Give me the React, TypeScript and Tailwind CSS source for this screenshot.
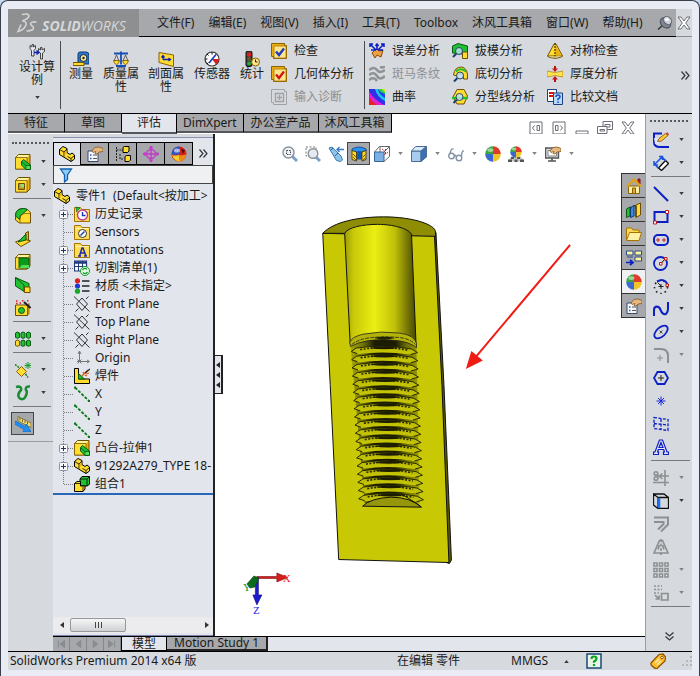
import React, { type ReactNode } from "react";

const Y = "#ffdc2e";
const YD = "#e8ae14";
const YL = "#fff4a0";
const K = "#6e4e00";
const G = "#1fc032";
const GD = "#0a5a14";
const B = "#0b1fc4";
const N = "#8d8f92";

const box = (
  <>
    <path d="M.5 3.500 3.500.5H15V12l-3 3H.5z" fill={YD} stroke={K} />
    <path d="M1 3.500 3.500 1h11l-2.500 2.500z" fill={YL} />
    <path d="M.5 3.500H12V15H.5z" fill={Y} stroke={K} strokeWidth=".7" />
  </>
);
const check = (color: string) => (
  <>
    <path d="M.5.5h13v2h2v13H2.500v-2h-2z" fill={YD} stroke="#8a6200" />
    <path d="M3 3h12v12H3z" fill="#ffe68a" stroke="#a87400" strokeWidth=".8" />
    <path d="M5 8.500l3 3.500 5-6.500" fill="none" stroke={color} strokeWidth="2.400" />
  </>
);
const ball = (cx: number, cy: number, r: number) => (
  <>
    <path d={`M${cx} ${cy}V${cy - r}A${r} ${r} 0 0 0 ${cx - r} ${cy}z`} fill="#3ca63c" />
    <path d={`M${cx} ${cy}V${cy - r}A${r} ${r} 0 0 1 ${cx + r} ${cy}z`} fill="#e23a2a" />
    <path d={`M${cx} ${cy}V${cy + r}A${r} ${r} 0 0 1 ${cx - r} ${cy}z`} fill="#3a6ad0" />
    <path d={`M${cx} ${cy}V${cy + r}A${r} ${r} 0 0 0 ${cx + r} ${cy}z`} fill="#f0c52a" />
    <ellipse cx={cx - r / 3} cy={cy - r / 2} rx={r / 2.500} ry={r / 4} fill="#fff" opacity=".5" />
  </>
);
const folder = (
  <>
    <path d="M.5 1.500h6L8 3.500h7.500v12H.5z" fill="#ffdc58" stroke="#a87400" />
    <path d="M1.500 4.500h13" stroke="#fff4b0" />
  </>
);
const hand = (
  <path d="M5 5l3-3.500 4-.5 4 1.500v3l-4 .5-2 2-2-.5 1-2-3 1z" fill="#e8b87c" stroke="#7a4c1c" strokeWidth=".7" />
);
const lens = (cx: number, cy: number, r: number) => (
  <>
    <path d={`M${cx - r + 1} ${cy + r - 1}l-3.500 3.500`} stroke="#1c3c70" strokeWidth="2" />
    <circle cx={cx} cy={cy} r={r} fill="#bfe4f4" fillOpacity=".8" stroke="#2a4a66" />
  </>
);
const part = (
  <>
    <path d="M.5 3.500 4 .5l4 2v4l3 2 2-1.500 2.500 2v4L12 15.500.5 8.500z" fill={Y} stroke="#000" strokeLinejoin="round" />
    <path d="M.5 3.500l4.500 2.500v4.500M5 6l3-3M8.500 10.500l3.500 2v3M12 12.500l3.500-3" fill="none" stroke="#000" strokeWidth=".8" />
    <path d="M5.500 6.500 7.500 4.500v3l-2 1.500z" fill={YD} />
  </>
);
const plane = (
  <path d="M2.500 8 8 2l5.500 6L8 14.500zM0 .5l15.500 15M1.500 15.500 4.500 12.500M12 3l2.500-2.500" fill="none" stroke="#333" />
);
const axis = (
  <>
    <path d="M1 1.500 15 15" stroke="#0a7a18" strokeWidth="1.800" strokeDasharray="3 1.500" />
    <path d="M0 .5h2v2H0zM14 14h2v2h-2z" fill="#0a7a18" />
  </>
);

const icons: Record<string, ReactNode> = {
  study: (
    <g fill="#e6e8ea" stroke="#454545">
      <path d="M1 1.500 3 3V.5h1.500V3l2-1.500v3L5 6.500V12H2.500V6.500L1 4.500z" />
      <path d="M9.500 4.500 11.500 6V3.500H13V6l2.500-1.500v3L13.500 9v6h-2V9l-2-1.500z" />
      <path d="M5 8.500h4M7.500 6.500l2.500 2-2.500 2" fill="none" stroke={B} strokeWidth="1.300" />
    </g>
  ),
  tape: (
    <>
      <path d="M5 3q0-2 2-2h6q3 0 3 3v9H5z" fill="#2a78d0" stroke="#123a6a" />
      <circle cx="10.500" cy="7" r="3.500" fill="#ffe27a" stroke="#0c2c54" />
      <circle cx="10.500" cy="7" r="1.200" fill="#0c2c54" />
      <path d="M0 11.500h11v3H0z" fill={Y} stroke="#7a5400" />
    </>
  ),
  scales: (
    <>
      <path d="M1 2.500h14M8 .5v13M3 15h10" stroke="#1450b4" strokeWidth="1.800" />
      <path d="M3.500 4 1 10h5zM12.500 4 10 10h5z" fill="none" stroke="#444" strokeWidth=".8" />
      <path d="M.5 9.500h6q-1 4-3 4t-3-4zM9.500 9.500h6q-1 4-3 4t-3-4z" fill={Y} stroke="#7a5400" strokeWidth=".8" />
    </>
  ),
  sectionProp: (
    <>
      <path d="M1 1.500 15.500 4v11.500L1 11.500z" fill={Y} stroke="#8a6200" />
      <path d="M5 8.500V5M3.500 6.500 5 4.500l1.500 2M5 8.500h7M10.500 7l2 1.500-2 1.500" fill="none" stroke={B} strokeWidth="1.300" />
    </>
  ),
  gauge: (
    <>
      <circle cx="8" cy="8" r="7" fill="#fff" stroke="#333" strokeWidth="1.200" />
      <path d="M8 8h7a7 7 0 0 1-3 5.500z" fill="#d42020" />
      <path d="M8 1v2.500M1 8h2.500M3 3l1.500 1.500M3 13l1.500-1.500" stroke="#111" />
      <path d="M5 12l7-8.500" stroke="#1a3ac0" strokeWidth="1.600" />
    </>
  ),
  stats: (
    <>
      <path d="M2 1.500Q2 0 4 0h2q2 0 2 1.500V14q0 1.500-2 1.500H4Q2 15.500 2 14z" fill="#3c3c3c" stroke="#111" />
      <circle cx="5" cy="3.500" r="2.300" fill="#e02020" />
      <circle cx="5" cy="8" r="2" fill="#6a5a20" />
      <circle cx="5" cy="12.500" r="2" fill="#28a838" />
      <circle cx="11.500" cy="11" r="4" fill="#ffe88a" stroke="#8a6200" />
      <path d="M11.500 8.500V11h2" fill="none" stroke="#222" />
    </>
  ),
  checkBlue: check("#1c3cc0"),
  checkRed: check("#d01818"),
  importDiag: (
    <g fill="none" stroke="#a0a2a5">
      <path d="M.5.5h13v2h2v13H2.500v-2h-2z" />
      <path d="M4.500 4.500h8v8h-8zM8.500 6v5M6 8.500h5" strokeWidth="1.400" />
    </g>
  ),
  deviation: (
    <>
      <path d="M3 10l4-4 4 2 3-1-2 7-4-2-2 3z" fill="#f0a040" stroke="#8a4a00" />
      <path d="M1 1l6 6M15 1 9 7M1 4V1h3M12 1h3v3M8 7V1M6.500 3 8 1l1.500 2M2 7l5 0M9 7h5" fill="none" stroke={B} strokeWidth="1.500" />
    </>
  ),
  zebra: (
    <g fill="none" stroke="#909396" strokeWidth="2.600">
      <path d="M0 4q5-4 8 0t8 0" />
      <path d="M0 9q5-4 8 1t8 0" />
      <path d="M0 14q5-4 8 1M11 1q3 1 5-1" />
    </g>
  ),
  curvature: (
    <>
      <path d="M0 0h16v16H0z" fill="#2040e8" />
      <path d="M0 0h9q1 6 7 9v7H0z" fill="#18c8e8" />
      <path d="M0 0h6q2 8 10 12v4H0z" fill="#3030e8" />
      <path d="M0 2q4 8 15 14H0z" fill="#e020d0" />
      <path d="M0 8q3 5 8 8H0z" fill="#e82020" />
      <path d="M9 0h7v5q-4-1-7-5z" fill="#30d848" />
      <path d="M13 0h3v3z" fill="#e8e020" />
    </>
  ),
  draft: (
    <>
      <path d="M.5 3 6 .5l9.500 2.500v9l-5-1-10-1z" fill={G} stroke={GD} />
      <path d="M10.500 9h5v6.500h-5z" fill={Y} stroke={K} />
      {lens(7, 8, 3.500)}
    </>
  ),
  undercut: (
    <>
      <path d="M1.500 9q1-8 8-8Q15 2 15.500 9v4h-4V9Q8 6 5 10z" fill={Y} stroke={K} />
      <path d="M4 5.500q4-4.500 10 0" stroke={G} strokeWidth="2" fill="none" />
      {lens(8, 9.500, 3.500)}
    </>
  ),
  parting: (
    <>
      <path d="M5 .5h7L15.500 7 12 15H5L1 8z" fill={Y} stroke={K} />
      <path d="M0 9h16" stroke={G} strokeWidth="2.400" />
      {lens(7.500, 8, 3.500)}
    </>
  ),
  symmetry: (
    <>
      <path d="M7 1h2l6.500 12H.5z" fill={Y} stroke="#7a5400" />
      <path d="M8.500 2l5.500 10.500H8.500z" fill={YD} />
      <path d="M8 0v16" stroke="#111" strokeDasharray="2 1" />
      <path d="M.5 13.500q7.500 3.500 15 0" fill={YL} stroke="#7a5400" />
    </>
  ),
  thickness: (
    <>
      <path d="M0 5q8 3 16 0v6q-8-3-16 0z" fill="#ffe34a" stroke="#b08000" strokeWidth=".7" />
      <path d="M8 0v3M8 16v-3" stroke="#b01010" strokeWidth="2" />
      <path d="M5 2.500h6L8 6zM5 13.500h6L8 10z" fill="#c81818" />
    </>
  ),
  compare: (
    <>
      <path d="M.5.5h9v12h-9z" fill="#fff" stroke="#1a4080" />
      <path d="M6.500 4h9v11.500h-9z" fill="#b8d8f8" stroke="#1a4080" />
      <path d="M2 4h5M2 7h5" stroke="#d01818" strokeWidth="1.800" />
      <path d="M9 8q0-2 2-2t2 1.800q0 1-2 2.200v1.200M11 12.500V14" fill="none" stroke="#1a50c0" strokeWidth="1.600" />
    </>
  ),
  pin: (
    <>
      <path d="M1 14.500l5-4.500" stroke="#333" strokeWidth="1.400" />
      <ellipse cx="8.500" cy="8" rx="5.800" ry="4.500" transform="rotate(42 8.500 8)" fill="#7e8490" stroke="#4a4e58" />
      <ellipse cx="10.500" cy="5.500" rx="4.500" ry="3.500" transform="rotate(42 10.500 5.500)" fill="#cfd3da" stroke="#5c606a" />
      <ellipse cx="10" cy="4.500" rx="2" ry="1.200" fill="#fff" />
    </>
  ),
  close: <path d="M2 2h3l3 4 3-4h3L9.700 8l4.300 6h-3L8 10l-3 4H2l4.300-6z" fill="#fff" stroke="#6a6e74" />,
  boss: (
    <>
      {box}
      <path d="M6.500 7.500l2-2 7 5.500v4.500H11L6.500 11z" fill={G} stroke={GD} />
      <path d="M6.500 7.500l4.500 4v4M11 11.500h4.500" fill="none" stroke={GD} strokeWidth=".8" />
      <path d="M11.500 12h3.500v3h-3.500z" fill="#52dc5a" />
    </>
  ),
  cut: (
    <>
      {box}
      <path d="M3.500 6.500h6v6h-6z" fill="#c88a10" stroke={K} />
      <path d="M5.500 7h3.500v3.500H5.500z" fill="#8ae08a" />
    </>
  ),
  fillet: (
    <>
      <path d="M.5 7q1-6.500 7.500-6.500 5 0 7.500 4V15H4.500L.5 12z" fill={Y} stroke={K} />
      <path d="M.5 8q0-7.500 8-7.500 2 0 4 1L8 5.500q-3.500 1-3.500 6z" fill={G} stroke={GD} />
      <path d="M5 15v-4q0-5 5-5.500h5" fill="none" stroke={K} strokeWidth=".7" />
    </>
  ),
  rib: (
    <>
      <path d="M.5 11 10 7l5.500 3-9.500 5.500z" fill={Y} stroke={K} />
      <path d="M10.500 2 13.500.5v9l-3-1z" fill={YD} stroke={K} />
      <path d="M3 11l8-8v6z" fill={G} stroke={GD} />
    </>
  ),
  shell: (
    <>
      {box}
      <path d="M4 4h10v10H4z" fill="#0a9a1a" stroke={GD} />
      <path d="M4 14l3-3h7v3z" fill="#52dc5a" />
    </>
  ),
  draftL: (
    <>
      <path d="M.5.500 14 6.500V14l-4 1L.5 9z" fill={G} stroke={GD} />
      <path d="M.5.500 9 8v7" fill="none" stroke={GD} />
      <path d="M9.500 10H15v5.500H9.500z" fill={Y} stroke={K} />
    </>
  ),
  wizard: (
    <>
      <path d="M.5 5h12v10.500H.5z" fill={Y} stroke={K} />
      <path d="M12.500 5 14 3.500v10l-1.500 2z" fill={YD} stroke={K} strokeWidth=".7" />
      <circle cx="6.500" cy="10.500" r="3" fill={G} stroke={GD} />
      <path d="M9 2l6.500 6" stroke="#222" strokeWidth="2" />
      <path d="M1 1h1.500M4.500 3H6M7 .8h1.500M12 .8h1.500M1 3.500h1.500" stroke="#e02020" strokeWidth="1.500" />
    </>
  ),
  pattern: (
    <>
      {[2.500, 8, 13.500].map((x) => (
        <path key={x} d={`M${x - 2} 2q2-2 4 0v4.500q-2 1.500-4 0z`} fill={G} stroke={GD} />
      ))}
      {[8, 13.500].map((x) => (
        <path key={x} d={`M${x - 2} 10q2-2 4 0v4.500q-2 1.500-4 0z`} fill={G} stroke={GD} />
      ))}
      <path d="M.5 10q2-2 4 0v4.500q-2 1.500-4 0z" fill={Y} stroke={K} />
    </>
  ),
  refGeom: (
    <>
      <path d="M1.500 9.500l5-5 5 5-5 5z" fill={Y} stroke="#8a6200" />
      <path d="M0 2.500l4 3M10.500 12l2.500 3.500" stroke="#0a7a18" strokeWidth="1.500" strokeDasharray="2 1" />
      <path d="M13 0v7M9.500 3.500h7M10.500 1l5 5M15.500 1l-5 5" stroke="#1a9a28" />
    </>
  ),
  curves: (
    <path d="M1 2q6-1.500 5 3-4 4-2 7.500 3 3.500 6 0 3-5.500 1-7.500-1-4 4-3.500" fill="none" stroke="#1d8a34" strokeWidth="2.600" />
  ),
  instant: (
    <>
      <path d="M3 .5 16 7v4.500L3 5z" fill="#f4e07a" stroke="#6a6030" strokeWidth=".8" />
      <path d="M5 2v2.500M7.500 3.500V6M10 4.500V7M12.500 6v2.500" stroke="#4a4420" strokeWidth=".8" />
      <path d="M.5 5 10 10.500l1.200-2.500L16 15.500l-8 .5 1-2.500L-.5 8z" fill="#1e90f4" stroke="#0c60b8" strokeWidth=".6" />
    </>
  ),
  part,
  property: (
    <>
      <path d="M1 5h10v10.500H1z" fill="#f6f7fa" stroke="#3a4a68" />
      <path d="M3 9h1.500M3 12.500h1.500" stroke="#2a58c0" strokeWidth="1.500" />
      <path d="M6 9h4M6 12.500h4" stroke="#555" />
      {hand}
    </>
  ),
  config: (
    <>
      <path d="M1.500 1v14M1.500 4H8M5 8v5h4" fill="none" stroke="#222" strokeDasharray="2 1" />
      <path d="M8 1.500 9.500.5H14V5l-1.500 1.500H8zM10 10.500l1.500-1H15.500V14L14 15.500h-4z" fill={Y} stroke="#000" />
    </>
  ),
  dimx: (
    <g fill="none" stroke="#c03cc8" strokeWidth="1.400">
      <circle cx="8" cy="8" r="4.500" />
      <path d="M8 0v16M0 8h16" />
      <path d="M6.500 2.500 8 0l1.500 2.500M6.500 13.500 8 16l1.500-2.500M2.500 6.500 0 8l2.500 1.500M13.500 6.500 16 8l-2.500 1.500" />
    </g>
  ),
  display: (
    <>
      <circle cx="8" cy="8" r="7.500" fill="#d82018" />
      <path d="M8 8V.5A7.500 7.500 0 0 0 .5 8Q4 10 8 8z" fill="#2a58c8" />
      <path d="M1 9q3 1 7 0l1 6.500Q3 15 1 9z" fill="#f4d02a" />
      <path d="M8 9q5 1 7.500-1-1 7-6.500 7.500z" fill="#e88a20" />
      <path d="M10 3l4 1-2 4z" fill="#501010" />
      <ellipse cx="6" cy="4.500" rx="3" ry="2" fill="#fff" opacity=".6" />
    </>
  ),
  funnel: <path d="M2.500 2h11L9.500 8v4.500L6.500 15V8z" fill="#8accf6" stroke="#1460b0" strokeWidth="1.300" />,
  history: (
    <>
      {folder}
      <circle cx="8.500" cy="9" r="5" fill="#fff" stroke="#c03a90" strokeWidth="1.400" />
      <path d="M8.500 6v3.500h3" fill="none" stroke="#1a3ab4" strokeWidth="1.400" />
      <path d="M2 1l4 1-3.500 4z" fill={G} stroke={GD} strokeWidth=".6" />
    </>
  ),
  sensors: (
    <>
      {folder}
      <circle cx="8.500" cy="9.500" r="4" fill="#fff" stroke="#333" />
      <path d="M6.500 11.500l4-4" stroke="#1a3ab4" strokeWidth="1.400" />
    </>
  ),
  annotations: (
    <>
      {folder}
      <path d="M4 14h3M10 14h3M5.500 14 8 6h1l3 8M6.500 11h4" fill="none" stroke="#1a2ab4" strokeWidth="1.500" />
    </>
  ),
  cutlist: (
    <>
      <path d="M.5 1h12v10H.5z" fill="#fff" stroke="#22387c" strokeWidth="1.200" />
      <path d="M.5 2.500h12" stroke="#22387c" strokeWidth="2.500" />
      <path d="M.5 6.500h12M4.500 1v10M8.500 1v10" stroke="#22387c" />
      <circle cx="11" cy="11" r="4.500" fill="#e8ffe8" stroke="#1a9a30" />
      <path d="M8.500 10q2-3 4.500-.5M13.500 12q-2 3-4.500.5" fill="none" stroke="#1a9a30" strokeWidth="1.400" />
    </>
  ),
  material: (
    <>
      <circle cx="3.500" cy="2.800" r="2.600" fill="#e02020" />
      <circle cx="3.500" cy="8" r="2.600" fill="#2038d8" />
      <circle cx="3.500" cy="13.200" r="2.600" fill="#18a828" />
      <path d="M8 3h7.500M8 8h7.500M8 13h7.500" stroke="#222" strokeWidth="1.600" />
    </>
  ),
  plane,
  origin: (
    <g fill="none" stroke="#777">
      <path d="M5.500 2v9.500H15M4 4l1.500-3L7 4M13 10l2.500 1.500L13 13" />
      <path d="M3.500 9.500l4 4M7.500 9.500l-4 4M3 11.500h5" />
    </g>
  ),
  weld: (
    <>
      <path d="M.5.5H4.500V11H15.500v4.500H.5z" fill={Y} stroke="#000" />
      <path d="M4.500 11V5.500l6 5.500z" fill={G} stroke={GD} />
      <path d="M8 8l6-6M9 4l1 2M13 8l-2-1M15 5l-3 1" stroke="#e05a10" strokeWidth="1.300" />
      <path d="M11 5l5-4" stroke="#222" strokeWidth="1.300" />
    </>
  ),
  axis,
  combine: (
    <>
      <path d="M6 3 8 .5h7.500v7.500l-2 2H6z" fill={G} stroke="#000" />
      <path d="M.5 7.500 3 5.500h3.500V10H11v3l-2 2.500H.5z" fill={Y} stroke="#000" />
      <path d="M6 3h7v7M13 3l2-2M.5 7.500H6M9 15.500V11" fill="none" stroke="#000" strokeWidth=".8" />
    </>
  ),
  zoomFit: (
    <>
      <path d="M9.500 9.500 15 15" stroke="#7aa0cc" strokeWidth="3" />
      <circle cx="6.500" cy="6.500" r="5.500" fill="#eef3f8" stroke="#8a9098" strokeWidth="1.400" />
      <path d="M4.500 4.500h4v4h-4z" fill="none" stroke="#444" strokeDasharray="1.500 1" />
    </>
  ),
  zoomArea: (
    <>
      <path d="M1 1h10v9H1z" fill="none" stroke="#777" strokeDasharray="2 1.500" />
      <path d="M10.500 10.500 15 15" stroke="#7aa0cc" strokeWidth="3" />
      <circle cx="8" cy="7.500" r="4.800" fill="#e4eaf0" stroke="#8a9098" strokeWidth="1.400" />
    </>
  ),
  prevView: (
    <>
      <path d="M1 2l3-1 9 9 1.500 4-2 1.500-4-1z" fill="#8ec4ea" stroke="#3a78b0" />
      <path d="M2 5l3-3M7 10l3-3" stroke="#2a6494" />
      <path d="M16 3.500H9M11.500 1 9 3.500 11.500 6" fill="none" stroke="#3a78c8" strokeWidth="1.400" />
    </>
  ),
  section: (
    <>
      <path d="M1 3q7-4 14 0v2q-2 2-4 1V13H6V6Q3 7 1 5z" fill="#2a94f0" stroke="#0c3c88" strokeWidth=".8" />
      <path d="M6.500 5h4v8h-4z" fill="#1058b8" />
      <path d="M1 4.500l4.500 1.500v9L1 13.500zM11 6l4-1.500v9l-4 1.500z" fill="#ffd82a" stroke="#3a2c00" strokeWidth=".8" />
      <path d="M2 8l3 3M2 11l3 3M12 11l2.500-2.500M12 14l2.500-2.500" stroke="#3a2c00" strokeWidth=".7" />
    </>
  ),
  orient: (
    <>
      <path d="M.5 6H10v9.500H.5z" fill="#7ab0e4" stroke="#3a6494" />
      <path d="M.5 6l5-5.500h10L10 6M10 15.500l5.500-5V.5M6 1v5" fill="none" stroke="#666" />
      <path d="M11.500 3v6M8 3l3 2.500M10 8.500l4-2" stroke="#d02020" strokeDasharray="2 1" />
    </>
  ),
  dispStyle: (
    <>
      <path d="M.5 5H10v10.500H.5z" fill="#a8ccf0" stroke="#4a6c94" />
      <path d="M.5 5l4-4.500h11L10 5z" fill="#d8ebfc" stroke="#4a6c94" />
      <path d="M10 5l5.500-4.500V11L10 15.500z" fill="#3c70b4" stroke="#4a6c94" />
    </>
  ),
  glasses: (
    <g fill="none" stroke="#8494a8" strokeWidth="1.400">
      <circle cx="3.500" cy="10" r="2.800" />
      <circle cx="11" cy="12" r="2.800" />
      <path d="M6 9.500q1.500-1 2.500 1.500M2 7.500Q3 2 5.500 3M13.500 10Q14 4 16 5" />
    </g>
  ),
  ball: ball(8, 8, 7.800),
  scene: (
    <>
      <path d="M0 15.500l3-5h10l3 5z" fill="#c8c8c8" />
      <path d="M3 11h3v2H3zM9 11h3v2H9zM0 13.500h4V16H0zM6.500 13.500h3V16h-3zM12 13.500h4V16h-4z" fill="#555" />
      {ball(8, 6, 5.800)}
    </>
  ),
  viewSet: (
    <>
      <path d="M.5 2h13v10H.5z" fill="#d4d8de" stroke="#555" strokeWidth="1.400" />
      <path d="M3 4.500h8.500V10H3z" fill="#fff" stroke="#888" />
      <path d="M3 15h8M7 12v3" stroke="#555" strokeWidth="1.600" />
      {hand}
    </>
  ),
  paneL: (
    <g fill="#fff" stroke="#6a6e74">
      <path d="M2 2h12v12H2z" />
      <path d="M9 5.500h2.500v5H9zM6.500 5.500 4.500 8l2 2.500" fill="none" />
    </g>
  ),
  paneR: (
    <g fill="#fff" stroke="#6a6e74">
      <path d="M2 2h12v12H2z" />
      <path d="M4.500 5.500H7v5H4.500zM9.500 5.500l2 2.500-2 2.500" fill="none" />
    </g>
  ),
  minimize: <path d="M2 11h12v3H2z" fill="#fff" stroke="#6a6e74" />,
  restore: (
    <g fill="#fff" stroke="#6a6e74">
      <path d="M6 1.500h9.500v8H6zM8 4.500h5v2.500H8z" />
      <path d="M.5 6.500h9.500v7H.5zM3 9.500h4.500v1.500H3z" />
    </g>
  ),
  home: (
    <>
      <path d="M12 1h2v5h-2z" fill="#d03020" stroke="#7a1010" />
      <path d="M2.500 8h11v7.500h-11z" fill="#fff2a8" stroke="#8a6200" />
      <path d="M1 8.500 8 1.500l7 7" fill="none" stroke="#e0a020" strokeWidth="2.400" />
      <path d="M6.500 10h3v5.500h-3z" fill="#e0a830" stroke="#8a6200" />
    </>
  ),
  library: (
    <>
      <path d="M.5 7 4 5v9L.5 15.500z" fill={G} stroke={GD} />
      <path d="M4.500 5.500 8 3.500V14l-3.500 1.500z" fill="#3a8ae0" stroke="#123a78" />
      <path d="M10 3l4.500-2v12L10 15.500z" fill={Y} stroke={K} />
      <path d="M4 5l1.500 1M8 3.500l2 .5v11" fill="none" stroke="#222" />
    </>
  ),
  folder: (
    <>
      <path d="M.5 2h5L7 4h6v10H.5z" fill="#ffd858" stroke="#a87400" />
      <path d="M3.500 6.500h12l-2.500 8H.5z" fill="#fff0a8" stroke="#a87400" />
    </>
  ),
  palette: (
    <>
      <path d="M.5 1H7v4H.5zM9 1h6.500v4H9zM9 7h6.500v4H9z" fill="#fff4a0" stroke="#2a4a8a" />
      <path d="M0 12.500h6M4 10l3 2.500L4 15" fill="none" stroke={B} strokeWidth="1.700" />
      <path d="M1 7h6" stroke="#2a4a8a" />
    </>
  ),
  sketch: (
    <>
      <path d="M1 2.500V10q0 5 6 5h9M0 1.500h9" fill="none" stroke={B} strokeWidth="2" />
      <path d="M1 6h6l-1 6H2z" fill="#dfe6ff" />
      <path d="M4.500 9.500l1.500-3L12.500 1.500l2.500 2L8.500 9z" fill="#ffc83a" stroke="#7a4c00" strokeWidth=".8" />
      <path d="M12.500 1.500l2-1.200 1.500 2-1 1.500z" fill="#d04040" />
    </>
  ),
  smartDim: (
    <>
      <path d="M5.500 13 12.500 5.500l3 3-7 7z" fill="#fff" stroke="#111" strokeWidth="1.400" />
      <path d="M1.500 9.500 9 2M1 6v4h4M6 1.500h3.500V5M1 8l4 5M8 1l5 5" fill="none" stroke="#1a50e0" strokeWidth="1.500" />
    </>
  ),
  line: <path d="M1 1l14 14" stroke={B} strokeWidth="2" />,
  rect: (
    <>
      <path d="M1.500 3h13v10h-13z" fill="none" stroke={B} strokeWidth="2" />
      <path d="M.5 12h3v3h-3zM12.500 1.500h3v3h-3z" fill="#fff" stroke="#c01818" />
    </>
  ),
  slot: (
    <>
      <rect x="1" y="3" width="14" height="10" rx="4" fill="none" stroke={B} strokeWidth="2" />
      <path d="M4 7h2v2H4zM10 7h2v2h-2z" fill="#fff" stroke="#c01818" />
    </>
  ),
  circle: (
    <>
      <circle cx="7.500" cy="8.500" r="6.500" fill="none" stroke={B} strokeWidth="1.800" />
      <path d="M8 8.500l4-4.500" stroke="#111" />
      <path d="M6.500 7.500h2.500V10H6.500zM11.500 2.500H14V5h-2.500z" fill="#fff" stroke="#c01818" />
    </>
  ),
  arc: (
    <>
      <circle cx="8" cy="9" r="6.500" fill="none" stroke="#222" strokeWidth="1.600" strokeDasharray="1.600 3" />
      <path d="M4 3.500Q12-.5 14.500 7" fill="none" stroke={B} strokeWidth="2" />
      <path d="M8 6v5M5.500 8.500h5M4.500 4.500 8 8" stroke="#222" />
      <path d="M13 6h2.500v2.500H13z" fill="#fff" stroke="#c01818" />
    </>
  ),
  spline: <path d="M1 15V9q0-3.500 3-3.500 3 .5 4 4.500 2 4 5 3 2-2 2-5V1" fill="none" stroke={B} strokeWidth="2" />,
  ellipse: (
    <>
      <ellipse cx="8" cy="8" rx="8" ry="4.500" transform="rotate(-42 8 8)" fill="none" stroke={B} strokeWidth="1.800" />
      <path d="M6.500 6.500l3 3M9.500 6.500l-3 3" stroke="#222" strokeWidth=".8" />
    </>
  ),
  sketchFillet: (
    <g fill="none" stroke={N}>
      <path d="M1 2h7q7 0 7 7v7" strokeWidth="2" />
      <path d="M7 8v6M4 11h6" />
    </g>
  ),
  polygon: (
    <>
      <path d="M4.500 2h7L15 8l-3.500 6h-7L1 8z" fill="none" stroke={B} strokeWidth="1.800" />
      <path d="M8 5v6M5 8h6" stroke="#222" />
    </>
  ),
  point: <path d="M8 3.500v9M3.500 8h9M5 5l6 6M11 5l-6 6" stroke="#1a28d8" />,
  sketchPlane: (
    <path d="M1 1.500l14 2v11L1 12.500zM8 3v11M1 7.500l14 1.500" fill="none" stroke={B} strokeWidth="1.300" strokeDasharray="3 1.500" />
  ),
  text: (
    <path d="M6.500 1h3l4.500 12h1.500v2.500h-5V13h1l-.8-2.500H5.300L4.500 13h1v2.500h-5V13H2zM8 3.500 6 8.500h4z" fill="#e8eaf8" stroke={B} strokeWidth="1.200" />
  ),
  trim: (
    <g fill="none" stroke={N} strokeWidth="1.600">
      <circle cx="3" cy="3.500" r="1.800" />
      <circle cx="3" cy="8.500" r="1.800" />
      <path d="M4.500 5l5 4M4.500 7.500l5-4M12 0v16M0 12.500h16M7 6h9" />
    </g>
  ),
  convert: (
    <>
      <path d="M.5 1l4.500 3.500v11L.5 12zM5 4.500h10.500v11H5zM.5 1H11l4.500 3.500" fill="none" stroke="#111" strokeWidth="1.300" />
      <path d="M6 5v10" stroke="#1a70f0" strokeWidth="2.600" />
    </>
  ),
  offset: (
    <g fill="none" stroke={N} strokeWidth="2">
      <path d="M1 1.500h14v7l-7 7M1 6h9.500v2L5 13.500" />
    </g>
  ),
  mirror: (
    <>
      <path d="M6.500 1.500h3L15 14H1zM5 10.500 6.500 6M11 10.500 9.500 6" fill="none" stroke={N} strokeWidth="1.700" />
      <path d="M8 0v16" stroke={N} strokeWidth="1.600" strokeDasharray="3 1.500" />
    </>
  ),
  grid: (
    <g fill="#e8eaec" stroke={N} strokeWidth="1.600">
      {[1, 6.500, 12].map((y) => (
        <path key={y} d={`M1 ${y}h3v3H1zM6.500 ${y}h3v3h-3zM12 ${y}h3v3h-3z`} />
      ))}
    </g>
  ),
  move: (
    <g fill="none" stroke={N} strokeWidth="1.700">
      <path d="M1 1h8M1 4.500h8M1 8h5" strokeDasharray="2 1.500" />
      <path d="M8.500 8.500h6.500v6.500H8.500zM2 10l4 4M6 10.500V14H2.500" />
    </g>
  ),
  help: (
    <>
      <path d="M1 1h14v14H1z" fill="#e8f4e8" stroke="#1a4a78" strokeWidth="1.500" />
      <path d="M5.500 6q0-2.500 2.500-2.500t2.500 2q0 1.500-2.500 3v1.300M8 11v2" fill="none" stroke="#12a020" strokeWidth="2.200" />
    </>
  ),
  tag: (
    <>
      <path d="M1 10 9 1.500l4-.5 2.500 3-.5 4L7 15.500q-1.500.5-3-1l-2.500-2Q.5 11 1 10z" fill="#ffbe2a" stroke="#8a5000" strokeWidth="1.200" />
      <circle cx="12" cy="4.500" r="1.300" fill="#fff" stroke="#8a5000" />
      <path d="M5 10l4-4M7 12l4-4" stroke="#fff0b0" strokeWidth="1.300" />
    </>
  ),
};

function Icon({ name }: { name: string }) {
  return (
    <svg viewBox="0 0 16 16" className="size-4 flex-none" aria-hidden="true">
      {icons[name]}
    </svg>
  );
}

function Caret({ up = false, dim = false }: { up?: boolean; dim?: boolean }) {
  return (
    <svg viewBox="0 0 6 4" className="h-[3px] w-[5px] flex-none" aria-hidden="true">
      <path d={up ? "M0 4h6L3 0z" : "M0 0h6L3 4z"} fill={dim ? "#808285" : "#3a3c40"} />
    </svg>
  );
}

function More({ down = false }: { down?: boolean }) {
  return (
    <svg viewBox="0 0 9 9" className={down ? "size-[9px] rotate-90" : "size-[9px]"} aria-hidden="true">
      <path d="M.5.5l3.500 4-3.500 4M4.500.5l3.500 4-3.500 4" fill="none" stroke="#33363c" strokeWidth="1.200" />
    </svg>
  );
}

const menus = ["文件(F)", "编辑(E)", "视图(V)", "插入(I)", "工具(T)", "Toolbox", "沐风工具箱", "窗口(W)", "帮助(H)"];

function MenuBar() {
  return (
    <header className="flex h-7 flex-none bg-[#d6d9dd]">
      <div className="flex w-[131px] flex-none items-center gap-1 bg-[#8e8f90] pl-2">
        <svg viewBox="0 0 22 20" className="h-5 w-[22px] flex-none" aria-hidden="true">
          <g fill="none" stroke="#d2d3d5" strokeWidth="1.600">
            <path d="M6 1.500q7-1.500 7 1.500-1 3-6 4.500" />
            <path d="M6 8q5 0 4 4-2 5-8 6.500l3-7" />
            <path d="M20.500 9q-6-.5-6 1.800 0 1 2 2.500 2 2 0 3.500-2 1.200-6 1.200" />
          </g>
        </svg>
        <span className="pt-1.5 font-['Open_Sans'] text-[14px] leading-4 text-[#d6d7d9] italic">
          <b>SOLID</b>WORKS
        </span>
      </div>
      <nav className="flex min-w-0 flex-1 items-center gap-3.5 border-b border-black bg-[#a6a8ab] pl-4.5" aria-label="Menu">
        {menus.map((m) => (
          <button key={m} type="button" className="whitespace-nowrap">
            {m}
          </button>
        ))}
        <button type="button" aria-label="Pin" className="ml-auto pr-1">
          <Icon name="pin" />
        </button>
      </nav>
      <button type="button" aria-label="Close" className="flex w-4 flex-none items-center justify-center border-b border-[#8a8c90]">
        <Icon name="close" />
      </button>
    </header>
  );
}

function BigTool({ icon, label, className }: { icon: string; label: string; className: string }) {
  return (
    <button type="button" className={`flex flex-none flex-col items-center pt-3.5 ${className}`}>
      <Icon name={icon} />
      <span className="w-9 text-center leading-[13px]">{label}</span>
    </button>
  );
}

type Small = [icon: string, label: string, disabled?: boolean];

function ToolColumn({ items, className }: { items: Small[]; className: string }) {
  return (
    <div className={`flex flex-none flex-col pt-0.5 ${className}`}>
      {items.map(([icon, label, disabled]) => (
        <button
          key={label}
          type="button"
          disabled={disabled}
          className="flex h-[23px] items-center gap-[7px] whitespace-nowrap disabled:text-[#8d8f92]"
        >
          <Icon name={icon} />
          {label}
        </button>
      ))}
    </div>
  );
}

function Ribbon() {
  return (
    <section className="flex h-[77px] flex-none border-b border-black bg-[#d6d9dd]" aria-label="Evaluate tools">
      <button type="button" className="ml-1.5 flex w-[46px] flex-none flex-col items-center pt-[7px]">
        <Icon name="study" />
        <span className="w-9 text-center leading-[13px]">设计算例</span>
        <span className="pt-2.5">
          <Caret />
        </span>
      </button>
      <div className="my-1 w-px bg-[#4a4c50]" />
      <BigTool icon="tape" label="测量" className="w-10" />
      <BigTool icon="scales" label="质量属性" className="w-10" />
      <BigTool icon="sectionProp" label="剖面属性" className="w-[50px]" />
      <BigTool icon="gauge" label="传感器" className="w-[42px]" />
      <BigTool icon="stats" label="统计" className="w-[38px]" />
      <ToolColumn
        className="w-[93px]"
        items={[
          ["checkBlue", "检查"],
          ["checkRed", "几何体分析"],
          ["importDiag", "输入诊断", true],
        ]}
      />
      <div className="my-1 w-px bg-[#4a4c50]" />
      <ToolColumn
        className="ml-1 w-[83px]"
        items={[
          ["deviation", "误差分析"],
          ["zebra", "斑马条纹", true],
          ["curvature", "曲率"],
        ]}
      />
      <ToolColumn
        className="w-[95px]"
        items={[
          ["draft", "拔模分析"],
          ["undercut", "底切分析"],
          ["parting", "分型线分析"],
        ]}
      />
      <ToolColumn
        className=""
        items={[
          ["symmetry", "对称检查"],
          ["thickness", "厚度分析"],
          ["compare", "比较文档"],
        ]}
      />
      <button type="button" aria-label="More tools" className="ml-auto pr-0.5">
        <More />
      </button>
    </section>
  );
}

const ribbonTabs: [string, string][] = [
  ["特征", "px-4"],
  ["草图", "px-4"],
  ["评估", "px-[15px]"],
  ["DimXpert", "px-1.5"],
  ["办公室产品", "px-[7px]"],
  ["沐风工具箱", "px-1.5"],
];

function TabStrip() {
  return (
    <div className="flex h-5 flex-none items-start bg-white">
      <div role="tablist" className="flex flex-none items-start">
        {ribbonTabs.map(([t, pad], i) => (
          <button
            key={t}
            type="button"
            role="tab"
            aria-selected={i === 2}
            className={`${pad} ${
              i === 2 ? "h-5 border-b-2 border-[#55575c] bg-[#e2e5ec]" : "h-[19px] border-b-2 border-[#55575c] bg-[#a6a8ab]"
            } border-r border-r-black whitespace-nowrap`}
          >
            {t}
          </button>
        ))}
      </div>
      <div className="ml-auto flex pt-1.5 pr-1.5">
        {["paneL", "paneR", "minimize", "restore", "close"].map((n) => (
          <button key={n} type="button" aria-label={n} className="flex w-[23px] justify-center">
            <Icon name={n} />
          </button>
        ))}
      </div>
    </div>
  );
}

type Tool = { icon: string; menu?: boolean; off?: boolean; on?: boolean } | "sep";

const leftTools: Tool[] = [
  { icon: "boss", menu: true },
  { icon: "cut", menu: true },
  "sep",
  { icon: "fillet", menu: true },
  { icon: "rib" },
  { icon: "shell" },
  { icon: "draftL" },
  { icon: "wizard" },
  "sep",
  { icon: "pattern", menu: true },
  "sep",
  { icon: "refGeom", menu: true },
  { icon: "curves", menu: true },
  "sep",
  { icon: "instant", on: true },
];

const rightTools: Tool[] = [
  { icon: "sketch", menu: true },
  { icon: "smartDim", menu: true },
  "sep",
  { icon: "line", menu: true },
  { icon: "rect", menu: true },
  { icon: "slot", menu: true },
  { icon: "circle", menu: true },
  { icon: "arc", menu: true },
  { icon: "spline", menu: true },
  { icon: "ellipse", menu: true },
  { icon: "sketchFillet", menu: true, off: true },
  { icon: "polygon" },
  { icon: "point" },
  { icon: "sketchPlane" },
  { icon: "text" },
  "sep",
  { icon: "trim", menu: true, off: true },
  { icon: "convert", menu: true },
  { icon: "offset", off: true },
  { icon: "mirror", off: true },
  { icon: "grid", menu: true, off: true },
  { icon: "move", menu: true, off: true },
  "sep",
];

function ToolStack({ tools }: { tools: Tool[] }) {
  return (
    <>
      <div className="mx-1 mb-1.5 border-t-2 border-dotted border-[#55585e]" />
      {tools.map((t, i) =>
        t === "sep" ? (
          <div key={i} className="h-2 pt-0.5 pr-0.5 pl-[5px]">
            <div className="h-px bg-[#77797d]" />
          </div>
        ) : (
          <div key={i} className="flex h-[23px] items-center pl-[3px]">
            <button
              type="button"
              aria-label={t.icon}
              disabled={t.off}
              aria-pressed={t.on}
              className={`flex size-[23px] items-center justify-center ${t.on ? "border border-[#44464a] bg-[#a6a8ab]" : ""}`}
            >
              <Icon name={t.icon} />
            </button>
            {t.menu && (
              <button type="button" aria-label={`${t.icon} options`} className="flex h-full w-[18px] items-center justify-center">
                <Caret dim={t.off} />
              </button>
            )}
          </div>
        ),
      )}
    </>
  );
}

const treeRows: [icon: string, label: string, expandable?: boolean][] = [
  ["history", "历史记录", true],
  ["sensors", "Sensors"],
  ["annotations", "Annotations", true],
  ["cutlist", "切割清单(1)", true],
  ["material", "材质 <未指定>"],
  ["plane", "Front Plane"],
  ["plane", "Top Plane"],
  ["plane", "Right Plane"],
  ["origin", "Origin"],
  ["weld", "焊件"],
  ["axis", "X"],
  ["axis", "Y"],
  ["axis", "Z"],
  ["boss", "凸台-拉伸1", true],
  ["part", "91292A279_TYPE 18-", true],
  ["combine", "组合1"],
];

function FeaturePanel() {
  return (
    <aside className="flex w-[162px] flex-none flex-col border-r-2 border-[#222] bg-[#e2e5ec]">
      <div className="h-1 border-b border-[#8a8fb0] bg-[#d6d9dd]" />
      <div className="mt-1 flex h-[23px] flex-none" role="tablist" aria-label="Manager">
        {["part", "property", "config", "dimx", "display"].map((n, i) => (
          <button
            key={n}
            type="button"
            role="tab"
            aria-label={n}
            aria-selected={i === 0}
            className={`flex w-7 items-center justify-center border-t border-r border-black ${
              i === 0 ? "border-l" : "border-b border-b-black bg-[#a6a8ab]"
            }`}
          >
            <Icon name={n} />
          </button>
        ))}
        <button type="button" aria-label="More managers" className="flex flex-1 items-center justify-center">
          <More />
        </button>
      </div>
      <label className="flex h-[19px] flex-none items-center border border-[#444] bg-[#eff0f2] pl-1">
        <Icon name="funnel" />
        <input type="text" aria-label="Filter" className="min-w-0 flex-1 bg-transparent px-1 outline-none" />
      </label>
      <div className="flex flex-1 flex-col overflow-hidden pt-[3px] whitespace-nowrap">
        <div className="flex h-[18px] flex-none items-center gap-1.5 pl-px">
          <Icon name="part" />
          <span className="whitespace-pre">零件1  (Default&lt;按加工&gt;</span>
        </div>
        <ul>
          {treeRows.map(([icon, label, expandable], i) => (
            <li key={label} className="flex h-[18px] items-center">
              <svg viewBox="0 0 21 18" className="h-[18px] w-[21px] flex-none" aria-hidden="true">
                <path
                  d={`M10.500 0V${i === treeRows.length - 1 ? 10 : 18}M11 9.500h10`}
                  stroke="#777a80"
                  strokeDasharray="1 1"
                  fill="none"
                />
                {expandable && (
                  <>
                    <rect x="6.500" y="5.500" width="8" height="8" rx="1" fill="#f8f9fb" stroke="#8a90a0" />
                    <path d="M8 9.500h5M10.500 7v5" stroke="#1c3468" />
                  </>
                )}
              </svg>
              <Icon name={icon} />
              <span className="pl-[5px]">{label}</span>
            </li>
          ))}
        </ul>
        <div className="border-b-2 border-[#2a66b8]" />
      </div>
      <div className="flex h-4 flex-none items-center bg-[#ececef]">
        <button type="button" aria-label="Scroll left" className="flex w-[17px] justify-center">
          <svg viewBox="0 0 4 6" className="h-1.5 w-1">
            <path d="M4 0v6L0 3z" fill="#333" />
          </svg>
        </button>
        <div className="flex h-3.5 w-14 items-center justify-center gap-0.5 rounded-xs border border-[#96989c] bg-linear-to-b from-[#f6f6f7] to-[#cfd1d4]">
          <i className="h-1.5 w-px bg-[#444]" />
          <i className="h-1.5 w-px bg-[#444]" />
          <i className="h-1.5 w-px bg-[#444]" />
        </div>
        <button type="button" aria-label="Scroll right" className="ml-auto flex w-3 justify-center">
          <svg viewBox="0 0 4 6" className="h-1.5 w-1">
            <path d="M0 0v6l4-3z" fill="#333" />
          </svg>
        </button>
      </div>
      <div className="h-[3px] flex-none border-b border-[#7c82a8]" />
    </aside>
  );
}

type View = [icon: string, menu?: boolean, on?: boolean];
const viewTools: View[] = [
  ["zoomFit"],
  ["zoomArea"],
  ["prevView"],
  ["section", false, true],
  ["orient", true],
  ["dispStyle", true],
  ["glasses", true],
  ["ball"],
  ["scene", true],
  ["viewSet", true],
];

const threads = Array.from({ length: 19 }, (_, i) => {
  const y = 347 + i * 8.2;
  return { y, l: 350.5 + i * 0.42, r: 418 + i * 0.33 };
});

function Model() {
  return (
    <svg viewBox="215 165 407 471" preserveAspectRatio="xMinYMin meet" className="min-w-0 flex-1" role="img" aria-label="Section view of threaded part">
      <defs>
        <linearGradient id="bore" x1="0" x2="1">
          <stop offset="0" stopColor="#9c9c08" />
          <stop offset=".12" stopColor="#c8c808" />
          <stop offset=".42" stopColor="#ecee14" />
          <stop offset=".7" stopColor="#c0c008" />
          <stop offset=".9" stopColor="#6e6e04" />
          <stop offset="1" stopColor="#484800" />
        </linearGradient>
        <linearGradient id="thread" x1="0" x2="1">
          <stop offset="0" stopColor="#a8a804" />
          <stop offset=".18" stopColor="#70700a" />
          <stop offset=".35" stopColor="#1c1c00" />
          <stop offset=".65" stopColor="#1c1c00" />
          <stop offset=".82" stopColor="#70700a" />
          <stop offset="1" stopColor="#a0a004" />
        </linearGradient>
      </defs>
      <path d="M435 232l1.500.5L444.500 385 452 561l-2 3.500-3-1z" fill="#5c5c00" stroke="#111" />
      <path d="M323 233.500 435 236l7.500 150 7 177.500L339 560.500 330.500 385z" fill="#c8c804" stroke="#111" />
      <path d="M323 233.500C334 222 358 217 384 217c30 0 52 8 52 15v4.500l-24-.5-67-2.500z" fill="#8f8d04" stroke="#111" />
      <path d="M345 233.500c3-6 18-9 33-9s31 4 34 10l4.500 109.500q-33-16-66 0z" fill="url(#bore)" stroke="#111" />
      <path d="M351 347q-2-8 12-11.500 17-3.500 36-1 17 2.500 18 12.500l3 157h-55z" fill="url(#thread)" />
      <path d="M350 343q2-6 14-8.500 17-3.500 36-1 15 2 17 10.500v4q-8-6-20-7-14-2-28 0-12 2-18 6z" fill="#b4b408" stroke="#222" strokeWidth=".8" />
      <path d="M352 345q8-6 20-7 14-1.500 28 0 10 1 16 7" fill="none" stroke="#222" strokeWidth=".8" strokeDasharray="4 1" />
      <path d="M374 338.500q10-2.500 22 0-11 3-22 0z" fill="#222200" />
      {threads.map(({ y, l, r }) => {
        const m = (l + r) / 2;
        return (
          <g key={y}>
            <path
              d={`M${l + 1} ${y + 5}L${l + 6} ${y + 1.5}Q${m} ${y - 2.5} ${r - 6} ${y + 2.5}L${r} ${y + 6}L${r - 7} ${y + 8}Q${m} ${y + 1} ${l + 7} ${y + 7}Z`}
              fill="#bebe04"
              stroke="#1c1c00"
              strokeWidth=".9"
            />
            <path
              d={`M${l + 10} ${y + 3}Q${m} ${y - 1} ${r - 10} ${y + 3.5}`}
              fill="none"
              stroke="#2a2a00"
              strokeWidth="1.6"
              strokeDasharray="2 1.500"
            />
            <path d={`M${m - 15} ${y + 1.5}Q${m} ${y - 1.5} ${m + 15} ${y + 1.5}Q${m} ${y + 4} ${m - 15} ${y + 1.5}z`} fill="#1c1c00" />
            <path d={`M${l + 7} ${y + 6.5}Q${m} ${y + 2.500} ${r - 7} ${y + 7}`} fill="none" stroke="#c4c404" strokeWidth="2.600" />
          </g>
        );
      })}
      <path d="M363 507q8-8 28-9 20 0 31 10z" fill="#96960a" stroke="#111" />
      <path d="M401 494l20 13" stroke="#111" />
      <path d="M571 245 475 359" stroke="#f01c14" strokeWidth="2" />
      <path d="M466.500 369.500l5.500-18 11.500 9.500z" fill="#f01c14" />
      <path d="M257 577.500h20v-3.500l11 4.500-11 4.500v-3.500h-20z" fill="#d81c1c" stroke="#7a1010" strokeWidth=".6" />
      <path d="M255.500 579h3v17h3.500l-5 10-4-10h2.500z" fill="#1c1cd0" stroke="#0c0c60" strokeWidth=".6" />
      <path d="M254 577l5 2-4 9-5 1-3-4z" fill="#0c6a1c" stroke="#083c10" strokeWidth=".6" />
      <g fontFamily="Liberation Serif, serif" fontSize="11">
        <text x="283" y="583" fill="#f02020">X</text>
        <text x="243" y="592" fill="#12902a">Y</text>
        <text x="253" y="615" fill="#2020f0">Z</text>
      </g>
    </svg>
  );
}

function Viewport() {
  return (
    <section className="relative flex min-w-0 flex-1 flex-col bg-white">
      <div className="flex h-[31px] flex-none items-end justify-center pr-1">
        {viewTools.map(([icon, menu, on]) => (
          <React.Fragment key={icon}>
            <button
              type="button"
              aria-label={icon}
              aria-pressed={on}
              className={`flex size-[23px] items-center justify-center ${on ? "border border-[#44464a] bg-[#a6a8ab]" : ""}`}
            >
              <Icon name={icon} />
            </button>
            {menu && (
              <button type="button" aria-label={`${icon} options`} className="flex h-[23px] w-3.5 items-center justify-center">
                <Caret dim />
              </button>
            )}
          </React.Fragment>
        ))}
      </div>
      <div className="flex min-h-0 flex-1">
        <Model />
        <div className="mt-2 flex w-6 flex-none flex-col self-start border-t border-[#333]">
          {["home", "library", "folder", "palette", "ball", "property"].map((n) => (
            <button
              key={n}
              type="button"
              aria-label={n}
              className={`flex h-6 items-center justify-center border-b border-l border-[#333] ${n === "ball" ? "bg-[#f0f1f4]" : "bg-[#a6a8ab]"}`}
            >
              <Icon name={n} />
            </button>
          ))}
        </div>
      </div>
      <button
        type="button"
        aria-label="Collapse panel"
        className="absolute top-[221px] left-0 flex h-[39px] w-2 flex-col items-center justify-center gap-1 border-y border-r-2 border-[#222] bg-[#e2e5ec]"
      >
        {[0, 1, 2].map((n) => (
          <svg key={n} viewBox="0 0 4 6" className="h-1.5 w-1">
            <path d="M4 0v6L0 3z" fill="#222" />
          </svg>
        ))}
      </button>
    </section>
  );
}

const navGlyphs = ["M5 4v8M12 4 7 8l5 4z", "M11 4 6 8l5 4z", "M6 4l5 4-5 4z", "M4 4l5 4-5 4zM11 4v8"];

function BottomTabs() {
  return (
    <div className="flex h-[15px] flex-none border-t border-black bg-[#e2e5ec]">
      {navGlyphs.map((d) => (
        <button key={d} type="button" aria-label="Tab navigation" className="w-[17px] border-r border-[#85878b] bg-[#a6a8ab]">
          <svg viewBox="0 0 16 16" className="h-3.5 w-4">
            <path d={d} fill="#8a8c90" stroke="#85878b" />
          </svg>
        </button>
      ))}
      <button type="button" className="border-r border-b border-l border-black bg-[#e2e5ec] px-2.5 leading-3">
        模型
      </button>
      <button type="button" className="border-r-2 border-b-2 border-[#222] bg-[#a6a8ab] px-[7px] leading-3">
        Motion Study 1
      </button>
    </div>
  );
}

function StatusBar() {
  return (
    <footer className="flex h-[19px] flex-none items-center border-t border-black bg-[#d6d9dd] pl-0.5">
      <span className="flex-1">SolidWorks Premium 2014 x64 版</span>
      <span className="w-[114px]">在编辑 零件</span>
      <button type="button" className="flex w-[75px] items-center gap-4">
        MMGS
        <Caret up />
      </button>
      <button type="button" aria-label="Help" className="w-16">
        <Icon name="help" />
      </button>
      <button type="button" aria-label="Tags" className="w-8">
        <Icon name="tag" />
      </button>
      <svg viewBox="0 0 10 12" className="h-3 w-2.5" aria-hidden="true">
        <path d="M8 1h2v2H8zM4 5h2v2H4zM8 5h2v2H8zM0 9h2v2H0zM4 9h2v2H4zM8 9h2v2H8z" fill="#b4b8be" />
      </svg>
    </footer>
  );
}

export default function App() {
  return (
    <div className="bg-[#c4d8f0]">
      <div className="flex h-screen min-h-[676px] flex-col rounded-t-lg border-x border-t border-[#3a3e4c] bg-[#e9ecf5] px-[7px] pt-2 pb-1.5 font-['Noto_Sans','Noto_Sans_CJK_SC',sans-serif] text-[12px] leading-4 text-[#1a1a1a]">
        <MenuBar />
        <Ribbon />
        <main className="flex min-h-0 flex-1">
          <div className="flex min-w-0 flex-1 flex-col">
            <TabStrip />
            <div className="flex min-h-0 flex-1">
              <div className="w-[45px] flex-none bg-[#d6d9dd]">
                <div className="border-b border-[#9a9ca0] pt-2 pb-1.5">
                  <ToolStack tools={leftTools} />
                </div>
              </div>
              <div className="flex min-w-0 flex-1 flex-col">
                <div className="flex min-h-0 flex-1">
                  <FeaturePanel />
                  <Viewport />
                </div>
                <BottomTabs />
              </div>
            </div>
          </div>
          <div className="flex w-[47px] flex-none flex-col items-stretch border-l border-[#9a9ca0] bg-[#d6d9dd] pt-1.5">
            <ToolStack tools={rightTools} />
            <button type="button" aria-label="More sketch tools" className="mt-auto mb-2.5 flex justify-center">
              <More down />
            </button>
          </div>
        </main>
        <StatusBar />
      </div>
    </div>
  );
}
